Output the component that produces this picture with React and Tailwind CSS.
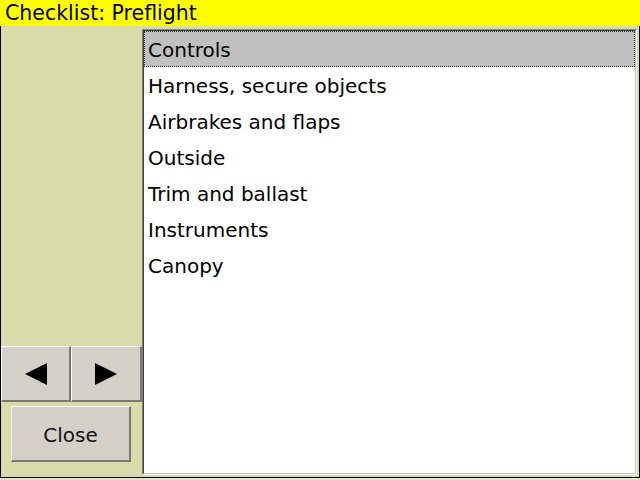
const items = [
  'Controls',
  'Harness, secure objects',
  'Airbrakes and flaps',
  'Outside',
  'Trim and ballast',
  'Instruments',
  'Canopy',
];

const font = { fontFamily: '"DejaVu Sans", Verdana, sans-serif' };

function Raised({ className = '', children }) {
  return (
    <div
      className={`flex items-center justify-center border-t border-l border-t-white border-l-white border-r-2 border-b-2 border-r-[#7a7770] border-b-[#7a7770] bg-[#d4d0c8] ${className}`}
    >
      {children}
    </div>
  );
}

function Triangle({ dir }) {
  return (
    <svg width="22" height="22" viewBox="0 0 22 22">
      {dir === 'left' ? (
        <polygon points="22,0 22,22 0,11" fill="#000" />
      ) : (
        <polygon points="0,0 0,22 22,11" fill="#000" />
      )}
    </svg>
  );
}

export default function App() {
  return (
    <div className="flex h-[480px] w-[640px] flex-col overflow-hidden bg-[#e4e2c4]" style={font}>
      <div className="flex h-[26px] items-center bg-[#ffff00] pl-[5px] text-[20.5px] leading-none text-black">
        Checklist: Preflight
      </div>

      <div className="flex h-[452px] border-x border-b border-black bg-[#dadbab]">
        <div className="flex w-[141px] flex-col">
          <div className="flex-1" />
          <div className="flex h-[56px]">
            <Raised className="w-[70px]">
              <Triangle dir="left" />
            </Raised>
            <Raised className="w-[71px]">
              <Triangle dir="right" />
            </Raised>
          </div>
          <div className="mt-[4px] mb-[15px] px-[10px]">
            <Raised className="h-[56px] w-[120px] pt-[3px] text-[20px] text-[#111]">Close</Raised>
          </div>
        </div>

        <div className="mt-[3px] mb-[2px] mr-[2px] flex flex-1 border-t border-l border-t-[#808080] border-l-[#808080] border-r border-b border-r-white border-b-white">
          <div className="flex flex-1 flex-col border-t border-l border-t-[#404040] border-l-[#404040] border-r border-b border-r-[#c0c0c0] border-b-[#c0c0c0] bg-white">
            {items.map((item, i) => (
              <div
                key={item}
                className={`flex h-[36px] items-center pt-[2px] pl-[3px] text-[20px] text-black ${
                  i === 0 ? 'border border-dotted border-[#333] bg-[#c0c0c0]' : 'border border-transparent'
                }`}
              >
                {item}
              </div>
            ))}
          </div>
        </div>
      </div>
    </div>
  );
}
